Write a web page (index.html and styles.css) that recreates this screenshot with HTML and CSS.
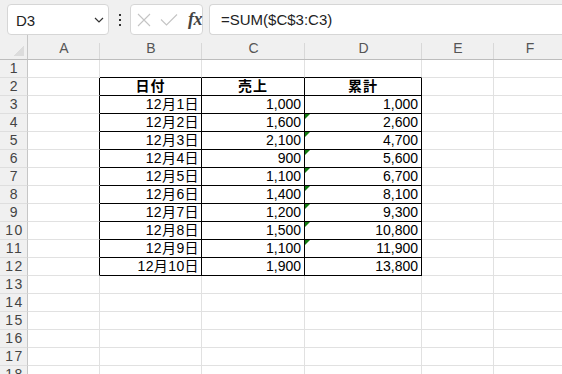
FILE: index.html
```html
<!DOCTYPE html>
<html lang="ja">
<head>
<meta charset="utf-8">
<link rel="stylesheet" href="styles.css">
</head>
<body>
<div class="toolbar">
  <div class="namebox">
    <span class="ref">D3</span>
    <svg class="chev" width="10" height="6" viewBox="0 0 10 6"><path d="M1 1 L5 5 L9 1" fill="none" stroke="#333" stroke-width="1.2"/></svg>
  </div>
  <div class="dots"><span></span><span></span><span></span></div>
  <div class="fxbox">
    <svg width="14" height="14" viewBox="0 0 14 14"><path d="M1 1 L13 13 M13 1 L1 13" stroke="#c4c4c4" stroke-width="1.1" fill="none"/></svg>
    <svg width="18" height="12" viewBox="0 0 18 12"><path d="M1 5.5 L6.5 11 L17 0.5" stroke="#c4c4c4" stroke-width="1.1" fill="none"/></svg>
    <span class="fx">fx</span>
  </div>
  <div class="formula">=SUM($C$3:C3)</div>
</div>
<div class="sheet">
  <div class="corner"></div><div class="ch">A</div><div class="ch">B</div><div class="ch">C</div><div class="ch">D</div><div class="ch">E</div><div class="ch">F</div>

  <div class="rh">1</div><div class="c"></div><div class="c top"></div><div class="c top"></div><div class="c top"></div><div class="c"></div><div class="c"></div>
  <div class="rh">2</div><div class="c lft"></div><div class="c t hd">日付</div><div class="c t hd">売上</div><div class="c t hd">累計</div><div class="c"></div><div class="c"></div>
  <div class="rh">3</div><div class="c lft"></div><div class="c t d">12月1日</div><div class="c t">1,000</div><div class="c t">1,000</div><div class="c"></div><div class="c"></div>
  <div class="rh">4</div><div class="c lft"></div><div class="c t d">12月2日</div><div class="c t">1,600</div><div class="c t g">2,600</div><div class="c"></div><div class="c"></div>
  <div class="rh">5</div><div class="c lft"></div><div class="c t d">12月3日</div><div class="c t">2,100</div><div class="c t g">4,700</div><div class="c"></div><div class="c"></div>
  <div class="rh">6</div><div class="c lft"></div><div class="c t d">12月4日</div><div class="c t">900</div><div class="c t g">5,600</div><div class="c"></div><div class="c"></div>
  <div class="rh">7</div><div class="c lft"></div><div class="c t d">12月5日</div><div class="c t">1,100</div><div class="c t g">6,700</div><div class="c"></div><div class="c"></div>
  <div class="rh">8</div><div class="c lft"></div><div class="c t d">12月6日</div><div class="c t">1,400</div><div class="c t g">8,100</div><div class="c"></div><div class="c"></div>
  <div class="rh">9</div><div class="c lft"></div><div class="c t d">12月7日</div><div class="c t">1,200</div><div class="c t g">9,300</div><div class="c"></div><div class="c"></div>
  <div class="rh">10</div><div class="c lft"></div><div class="c t d">12月8日</div><div class="c t">1,500</div><div class="c t g">10,800</div><div class="c"></div><div class="c"></div>
  <div class="rh">11</div><div class="c lft"></div><div class="c t d">12月9日</div><div class="c t">1,100</div><div class="c t g">11,900</div><div class="c"></div><div class="c"></div>
  <div class="rh">12</div><div class="c lft"></div><div class="c t d">12月10日</div><div class="c t">1,900</div><div class="c t">13,800</div><div class="c"></div><div class="c"></div>
  <div class="rh">13</div><div class="c"></div><div class="c"></div><div class="c"></div><div class="c"></div><div class="c"></div><div class="c"></div>
  <div class="rh">14</div><div class="c"></div><div class="c"></div><div class="c"></div><div class="c"></div><div class="c"></div><div class="c"></div>
  <div class="rh">15</div><div class="c"></div><div class="c"></div><div class="c"></div><div class="c"></div><div class="c"></div><div class="c"></div>
  <div class="rh">16</div><div class="c"></div><div class="c"></div><div class="c"></div><div class="c"></div><div class="c"></div><div class="c"></div>
  <div class="rh">17</div><div class="c"></div><div class="c"></div><div class="c"></div><div class="c"></div><div class="c"></div><div class="c"></div>
  <div class="rh">18</div><div class="c"></div><div class="c"></div><div class="c"></div><div class="c"></div><div class="c"></div><div class="c"></div>
</div>
</body>
</html>
```
FILE: styles.css
```css
* { box-sizing: border-box; }
html, body { margin: 0; padding: 0; }
body {
  width: 562px;
  height: 374px;
  overflow: hidden;
  background: #ffffff;
  font-family: "Liberation Sans", "Noto Sans CJK JP", sans-serif;
}
.toolbar {
  height: 35px;
  background: #f0f0f0;
  display: flex;
  align-items: flex-start;
  padding: 4px 0 0 7px;
  width: 562px;
  overflow: hidden;
}
.namebox {
  flex: none;
  width: 102px;
  height: 31px;
  background: #fff;
  border: 1px solid #d6d6d6;
  border-radius: 4px;
  display: flex;
  align-items: center;
  justify-content: space-between;
  padding: 0 4px 0 8px;
}
.ref {
  font-size: 15px;
  color: #222;
  padding-top: 2px;
}
.chev { margin-top: 1px; }
.dots {
  flex: none;
  width: 21px;
  height: 31px;
  display: flex;
  flex-direction: column;
  align-items: center;
  justify-content: center;
  gap: 3px;
}
.dots span {
  width: 2px;
  height: 2px;
  background: #333;
}
.fxbox {
  flex: none;
  width: 73px;
  height: 31px;
  background: #fff;
  border: 1px solid #d6d6d6;
  border-radius: 4px;
  display: flex;
  align-items: center;
  padding: 0 0 0 6px;
  gap: 9px;
}
.fx {
  font-family: "Liberation Serif", serif;
  font-style: italic;
  font-weight: bold;
  font-size: 18px;
  color: #444;
  margin-left: 1px;
  letter-spacing: -0.5px;
}
.formula {
  flex: 1;
  margin-left: 6px;
  height: 31px;
  background: #fff;
  border: 1px solid #d6d6d6;
  border-radius: 4px 0 0 4px;
  border-right: none;
  font-size: 15px;
  color: #222;
  padding: 6px 0 0 11px;
}
.sheet {
  display: grid;
  grid-template-columns: 28px 72px 102px 103px 117px 72px 72px;
  grid-template-rows: 25px repeat(18, 18px);
  width: 562px;
  overflow: hidden;
}
.corner {
  background: #f0f0f0 linear-gradient(to top left, #dcdcdc 50%, transparent 50%) no-repeat;
  background-size: 11px 10px;
  background-position: 13px 11px;
  border-right: 1px solid #c6c6c6;
  border-bottom: 1px solid #bdbdbd;
}
.ch {
  background: #f0f0f0 linear-gradient(#d8d8d8, #d8d8d8) no-repeat right bottom / 1px 16px;
  border-bottom: 1px solid #bdbdbd;
  display: flex;
  align-items: flex-end;
  justify-content: center;
  font-size: 14px;
  color: #555;
  line-height: 20px;
  padding-bottom: 1px;
}
.rh {
  background: #f0f0f0;
  border-right: 1px solid #c6c6c6;
  border-bottom: 1px solid #dedede;
  font-size: 14px;
  letter-spacing: 1.5px;
  padding-left: 2px;
  color: #444;
  text-align: center;
  line-height: 17px;
}
.c {
  border-right: 1px solid #e1e1e1;
  border-bottom: 1px solid #e1e1e1;
  font-size: 14px;
  line-height: 17px;
  color: #000;
  text-align: right;
  padding-right: 3px;
  white-space: nowrap;
}
.c.d { letter-spacing: 0.4px; padding-right: 2px; }
.c.top { border-bottom-color: #000; }
.c.lft { border-right-color: #000; }
.c.t {
  border-right-color: #000;
  border-bottom-color: #000;
}
.c.hd {
  font-weight: bold;
  text-align: center;
  padding-right: 0;
  letter-spacing: 1px;
}
.c.g { position: relative; }
.c.g::before {
  content: "";
  position: absolute;
  left: 0;
  top: 0;
  border-top: 5px solid #117a11;
  border-right: 5px solid transparent;
}
```
